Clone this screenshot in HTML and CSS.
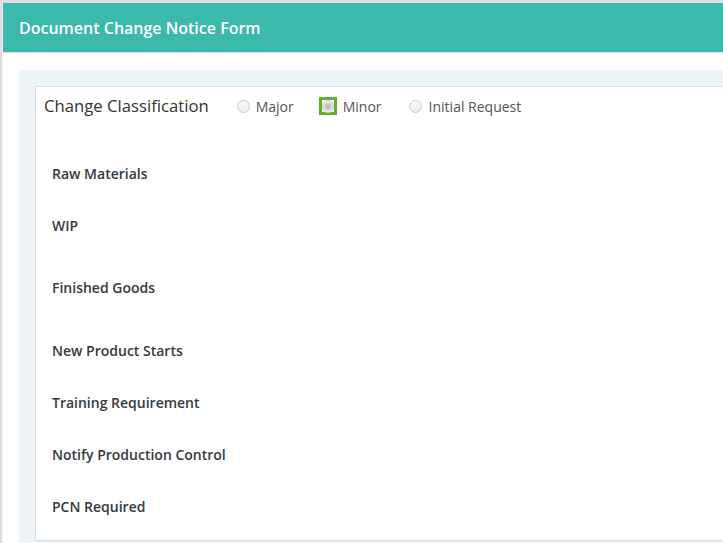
FILE: index.html
```html
<!DOCTYPE html>
<html>
<head>
<meta charset="utf-8">
<link rel="stylesheet" href="styles.css">
</head>
<body>
<div class="page">
  <div class="header">Document Change Notice Form</div>
  <div class="body">
    <div class="panel">
      <div class="card">
        <div class="class-row">
          <span class="class-title">Change Classification</span>
          <label class="opt opt-major"><span class="radio"></span>Major</label>
          <label class="opt opt-minor"><span class="focus"><span class="radio checked"></span></span>Minor</label>
          <label class="opt opt-initial"><span class="radio"></span>Initial Request</label>
        </div>
        <div class="row">Raw Materials</div>
        <div class="row">WIP</div>
        <div class="row tall">Finished Goods</div>
        <div class="row">New Product Starts</div>
        <div class="row">Training Requirement</div>
        <div class="row">Notify Production Control</div>
        <div class="row">PCN Required</div>
      </div>
    </div>
  </div>
</div>
</body>
</html>
```
FILE: styles.css
```css
html, body {
  margin: 0;
  padding: 0;
}
body {
  background: #dedede;
  font-family: "Open Sans", "Liberation Sans", sans-serif;
  width: 723px;
  height: 543px;
  overflow: hidden;
}
.page {
  margin: 3px 0 0 2px;
  background: #fff;
  border-left: 1px solid #f3f3f3;
  height: 540px;
}
.header {
  background: #3bb9aa;
  color: #fff;
  height: 50px;
  border-bottom: 1px solid #d8e4e2;
  box-sizing: border-box;
  padding-left: 16px;
  font-size: 16px;
  font-weight: 600;
  line-height: 51px;
}
.body {
  padding: 17px 0 0 16px;
}
.panel {
  background: #edf4f7;
  padding: 16px 0 0 16px;
  height: 457px;
}
.card {
  background: #fff;
  border: 1px solid #dcdfe2;
  border-right: none;
  height: 455px;
  box-sizing: border-box;
}
.class-row {
  display: flex;
  align-items: center;
  height: 38px;
  padding-left: 8px;
  margin-bottom: 22px;
}
.class-title {
  font-size: 16.7px;
  color: #333;
  margin-right: 28px;
  position: relative;
  top: -1px;
}
.opt {
  display: flex;
  align-items: center;
  font-size: 14px;
  color: #555;
}
.radio {
  display: inline-block;
  width: 11px;
  height: 11px;
  border-radius: 50%;
  border: 1px solid #c9c9c9;
  background: linear-gradient(#fafafa, #ececec);
  margin-right: 6px;
}
.radio.checked {
  margin: 0;
  background: radial-gradient(circle, #c4c4c4 0 3px, #e6e6e6 4px);
  border-color: #cfcfcf;
}
.opt-major {
  margin-right: 25px;
}
.focus {
  display: inline-flex;
  align-items: center;
  justify-content: center;
  width: 18px;
  height: 18px;
  box-sizing: border-box;
  border: 3px solid #67ad2b;
  margin-right: 6px;
}
.opt-minor {
  margin-right: 27px;
}
.opt-initial .radio {
  margin-right: 7px;
}
.row {
  height: 52px;
  display: flex;
  align-items: center;
  padding-left: 16px;
  font-size: 14px;
  font-weight: 600;
  color: #333a40;
}
.row.tall {
  height: 73px;
}
```
